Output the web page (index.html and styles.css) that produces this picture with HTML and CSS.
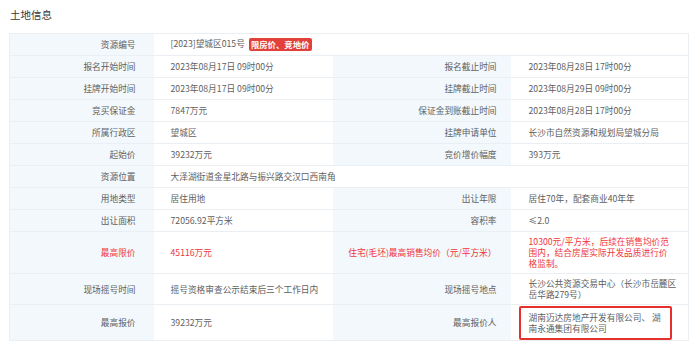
FILE: index.html
```html
<!DOCTYPE html>
<html lang="zh-CN">
<head>
<meta charset="utf-8">
<title>土地信息</title>
<link rel="stylesheet" href="styles.css">
</head>
<body>
<div class="page">
  <h2 class="title">土地信息</h2>
  <table class="info">
    <colgroup>
      <col class="c1"><col class="c2"><col class="c3"><col class="c4">
    </colgroup>
    <tr>
      <th>资源编号</th>
      <td colspan="3">[2023]望城区015号<span class="badge">限房价、竞地价</span></td>
    </tr>
    <tr>
      <th>报名开始时间</th><td>2023年08月17日 09时00分</td>
      <th>报名截止时间</th><td>2023年08月28日 17时00分</td>
    </tr>
    <tr>
      <th>挂牌开始时间</th><td>2023年08月17日 09时00分</td>
      <th>挂牌截止时间</th><td>2023年08月29日 09时00分</td>
    </tr>
    <tr>
      <th>竞买保证金</th><td>7847万元</td>
      <th>保证金到账截止时间</th><td>2023年08月28日 17时00分</td>
    </tr>
    <tr>
      <th>所属行政区</th><td>望城区</td>
      <th>挂牌申请单位</th><td>长沙市自然资源和规划局望城分局</td>
    </tr>
    <tr>
      <th>起始价</th><td>39232万元</td>
      <th>竞价增价幅度</th><td>393万元</td>
    </tr>
    <tr>
      <th>资源位置</th>
      <td colspan="3">大泽湖街道金星北路与振兴路交汉口西南角</td>
    </tr>
    <tr>
      <th>用地类型</th><td>居住用地</td>
      <th>出让年限</th><td>居住70年，配套商业40年年</td>
    </tr>
    <tr>
      <th>出让面积</th><td>72056.92平方米</td>
      <th>容积率</th><td>≤2.0</td>
    </tr>
    <tr class="red">
      <th>最高限价</th><td>45116万元</td>
      <th>住宅(毛坯)最高销售均价（元/平方米）</th>
      <td>10300元/平方米，后续在销售均价范围内，结合房屋实际开发品质进行价格监制。</td>
    </tr>
    <tr>
      <th>现场摇号时间</th><td>摇号资格审查公示结束后三个工作日内</td>
      <th>现场摇号地点</th><td>长沙公共资源交易中心（长沙市岳麓区岳华路279号）</td>
    </tr>
    <tr>
      <th>最高报价</th><td>39232万元</td>
      <th>最高报价人</th>
      <td class="boxed"><div class="winner">湖南迈达房地产开发有限公司、 湖南永通集团有限公司</div></td>
    </tr>
  </table>
</div>
</body>
</html>
```

FILE: styles.css
```css
html, body {
  margin: 0;
  padding: 0;
  background: #ffffff;
}
body {
  font-family: "Noto Sans CJK SC", "Noto Sans", "Liberation Sans", sans-serif;
  color: #606060;
}
.page {
  padding: 8px 4px 0 9px;
}
.title {
  margin: 0 0 11px 1px;
  font-size: 10.5px;
  line-height: 14px;
  font-weight: normal;
  color: #3a3a3a;
}
.info {
  width: 679px;
  border-collapse: collapse;
  table-layout: fixed;
  font-size: 8.7px;
  line-height: 11px;
  border: 1px solid #e9eff3;
}
.c1 { width: 144px; }
.c2 { width: 179px; }
.c3 { width: 178px; }
.c4 { width: 178px; }
.info th,
.info td {
  border-bottom: 1px solid #e9eff3;
  height: 13px;
  padding: 4px 0;
  vertical-align: middle;
}
.info th {
  background: #f2f8fc;
  font-weight: normal;
  text-align: right;
  padding-right: 18px;
  color: #606060;
}
.info th + td + th {
  padding-right: 14px;
}
.info td {
  background: #ffffff;
  text-align: left;
  padding-left: 17px;
  padding-right: 8px;
}
.info td + th + td {
  padding-left: 18px;
  padding-right: 11px;
}
.info .red td + th + td {
  padding-right: 16px;
}
.info .red th,
.info .red td {
  color: #f0353a;
}
.badge {
  display: inline-block;
  margin-left: 4px;
  padding: 1px 2px;
  background: #e2413b;
  color: #ffffff;
  font-weight: bold;
  font-size: 8.4px;
  border-radius: 2px;
  line-height: 11px;
  vertical-align: middle;
}
.info td.boxed {
  padding: 1px 16px 0 8px;
}
.winner {
  border: 2px solid #e5302c;
  border-radius: 2px;
  padding: 4px 8px 4px 8px;
}
```
